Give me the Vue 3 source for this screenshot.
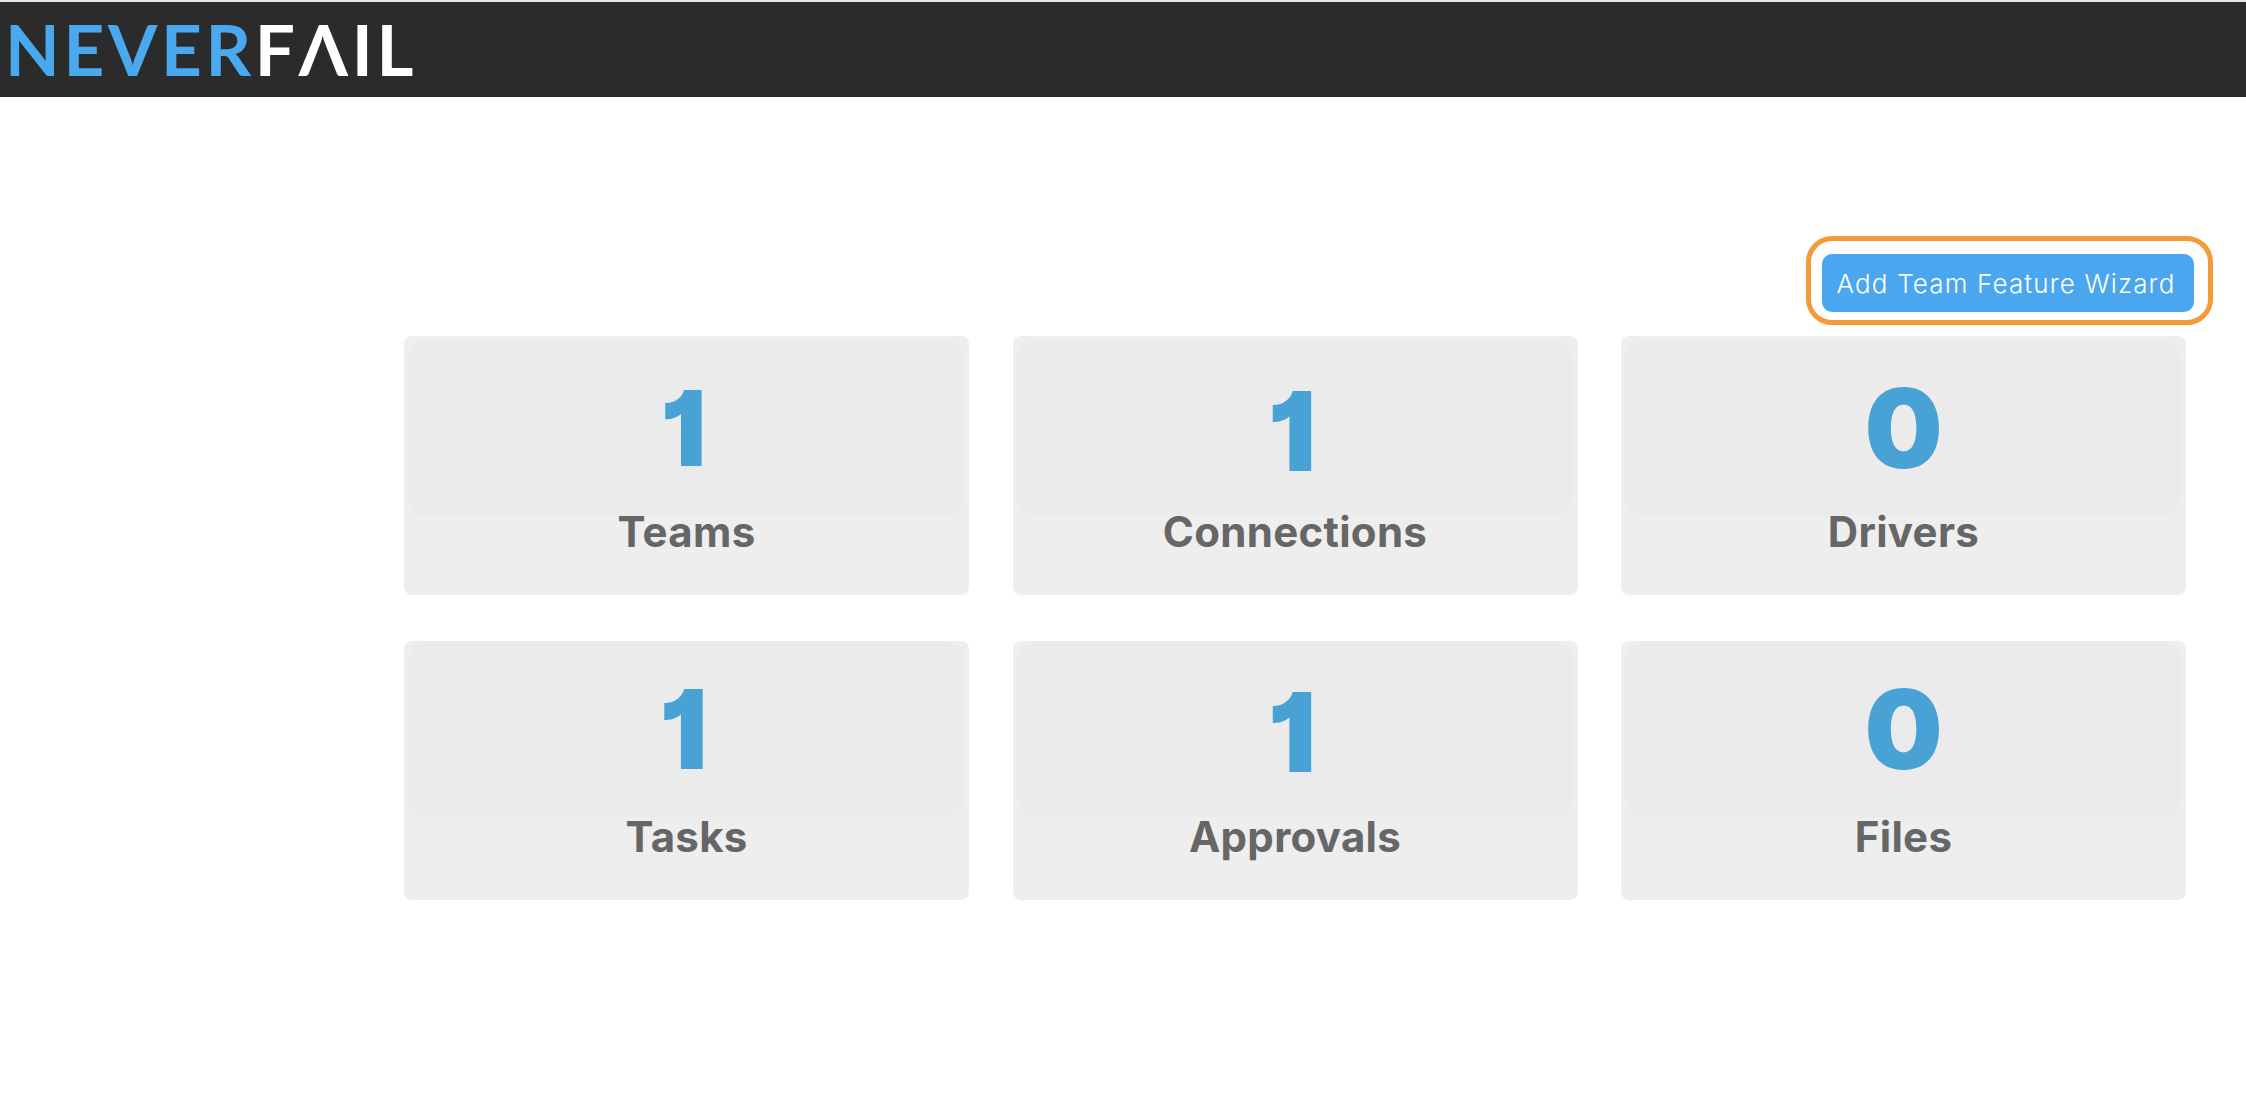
<template>
  <div class="page">
    <header class="topbar">
      <div class="logo"><span class="logo-blue">NEVER</span><span class="logo-white">F<span class="logo-a">Λ</span>IL</span></div>
    </header>
    <main class="content">
      <div class="actions">
        <div class="highlight">
          <button class="wizard-btn" type="button">Add Team Feature Wizard</button>
        </div>
      </div>
      <div class="cards">
        <div v-for="card in cards" :key="card.label" class="card" :class="card.cls">
          <div class="card-top">
            <span class="count" :class="{ one: card.count === 1 }">{{ card.count }}</span>
          </div>
          <div class="label">{{ card.label }}</div>
        </div>
      </div>
    </main>
  </div>
</template>

<script setup>
const cards = [
  { label: 'Teams', count: 1, cls: 'small-count' },
  { label: 'Connections', count: 1, cls: 'low-count' },
  { label: 'Drivers', count: 0 },
  { label: 'Tasks', count: 1, cls: 'flush' },
  { label: 'Approvals', count: 1, cls: 'flush low-count' },
  { label: 'Files', count: 0, cls: 'flush' }
]
</script>

<style>
html, body {
  background: #fff;
}
</style>

<style scoped>
.page {
  height: 1116px;
  overflow: hidden;
  font-family: Inter, "Liberation Sans", sans-serif;
}
.topbar {
  height: 95px;
  margin-top: 2px;
  background: #2b2b2b;
  box-shadow: 0 -2px 0 #e4e4e4;
  padding-left: 5px;
  display: flex;
  align-items: center;
}
.logo {
  font-family: Lato, sans-serif;
  font-size: 71px;
  line-height: 1;
  font-weight: 700;
  letter-spacing: 3.7px;
  margin-top: -2px;
}
.logo-blue {
  color: #4aa8ee;
}
.logo-white {
  color: #fff;
}
.content {
  padding: 139px 60px 0 404px;
}
.actions {
  display: flex;
  justify-content: flex-end;
  margin-right: -27px;
}
.highlight {
  padding: 13px 14px 8px 11px;
  border: 5px solid #f59a38;
  border-radius: 26px;
}
.wizard-btn {
  display: block;
  width: 372px;
  height: 58px;
  border: none;
  border-radius: 10px;
  padding: 0 4px 0 0;
  background: #4aa6ee;
  color: #fff;
  font-family: inherit;
  font-size: 26px;
  font-weight: 300;
  letter-spacing: 1.15px;
}
.cards {
  display: grid;
  grid-template-columns: repeat(3, 565px);
  column-gap: 43.5px;
  row-gap: 46px;
  margin-top: 11px;
}
.card {
  height: 259px;
  background: #eeeeee;
  border-radius: 8px;
  padding: 4px;
  box-sizing: border-box;
}
.card-top {
  height: 176px;
  background: #ebebeb;
  border-radius: 20px;
  display: flex;
  align-items: center;
  justify-content: center;
}
.flush .card-top {
  margin: -4px 0 4px;
}
.count {
  color: #48a2d6;
  font-size: 110px;
  line-height: 1;
  font-weight: 900;
  font-feature-settings: 'cv01';
}
.count.one {
  padding-right: 6px;
}
.small-count .count {
  font-size: 104px;
}
.low-count .count {
  padding-top: 5px;
}
.label {
  text-align: center;
  color: #666;
  font-size: 42px;
  font-weight: 700;
  letter-spacing: 0.3px;
  line-height: 46px;
  margin-top: -7px;
}
</style>
